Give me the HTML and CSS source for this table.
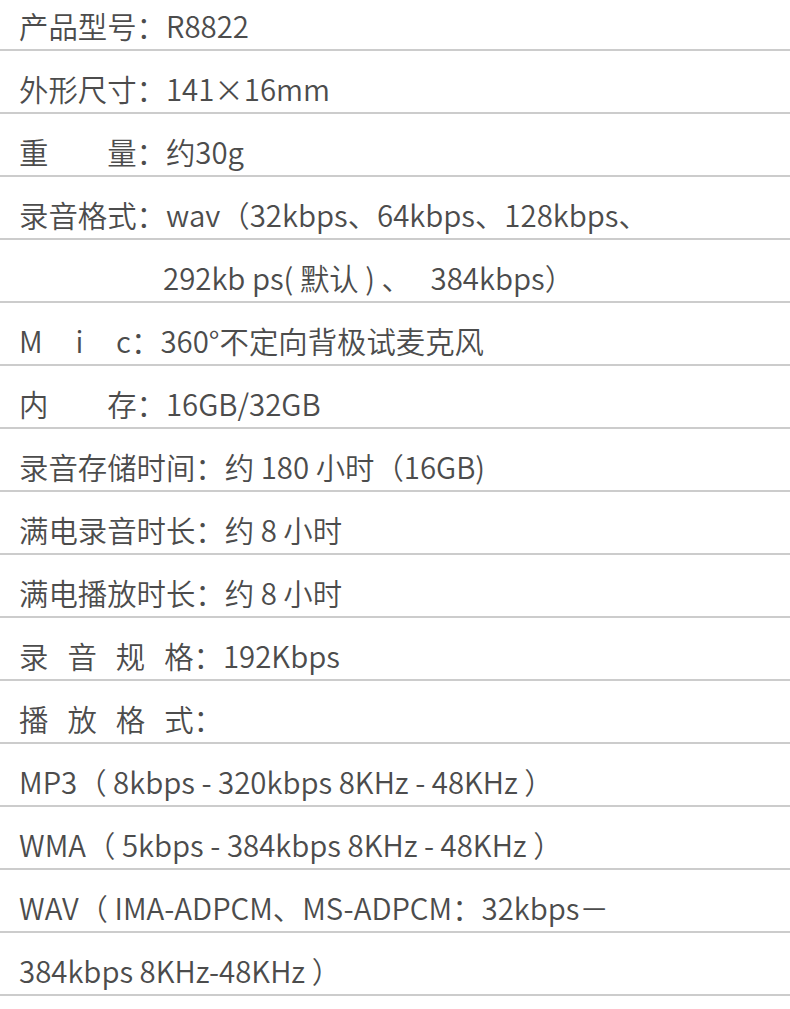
FILE: index.html
```html
<!DOCTYPE html>
<html lang="zh-CN">
<head>
<meta charset="utf-8">
<title>产品参数</title>
<link rel="stylesheet" href="styles.css">
</head>
<body>
<ul class="specs">
  <li class="row first">产品型号：R8822</li>
  <li class="row">外形尺寸：141×16mm</li>
  <li class="row">重　　量：约30g</li>
  <li class="row">录音格式：wav（32kbps、64kbps、128kbps、</li>
  <li class="row cont">292kb ps( 默认 ) 、&nbsp;&nbsp;&nbsp;384kbps）</li>
  <li class="row"><span class="mic">M i c</span>：360°不定向背极试麦克风</li>
  <li class="row">内　　存：16GB/32GB</li>
  <li class="row">录音存储时间：约 180 小时（16GB)</li>
  <li class="row">满电录音时长：约 8 小时</li>
  <li class="row">满电播放时长：约 8 小时</li>
  <li class="row"><span class="wide">录音规</span>格：192Kbps</li>
  <li class="row"><span class="wide">播放格</span>式：</li>
  <li class="row">MP3（ 8kbps - 320kbps 8KHz - 48KHz ）</li>
  <li class="row">WMA（ 5kbps - 384kbps 8KHz - 48KHz ）</li>
  <li class="row">WAV（ IMA-ADPCM、MS-ADPCM：32kbps－</li>
  <li class="row">384kbps 8KHz-48KHz ）</li>
</ul>
</body>
</html>
```

FILE: styles.css
```css
html, body {
  margin: 0;
  padding: 0;
  background: #ffffff;
}

body {
  font-family: "Noto Sans CJK SC", "Noto Sans", sans-serif;
  font-size: 29.4px;
  font-weight: 350;
  color: #4c4c4c;
}

.specs {
  list-style: none;
  margin: 0;
  padding: 0;
}

.row {
  box-sizing: border-box;
  height: 63px;
  padding: 13px 0 0 19px;
  border-bottom: 2px solid #cccccc;
  display: flex;
  align-items: center;
  white-space: pre;
  line-height: 36px;
}

.row.first {
  height: 51px;
  padding-top: 0;
}

.row.cont {
  padding-left: 163px;
}

.mic {
  display: inline-block;
  width: 112px;
  text-align: justify;
  text-align-last: justify;
  white-space: normal;
}

.wide {
  letter-spacing: 19px;
}
```
